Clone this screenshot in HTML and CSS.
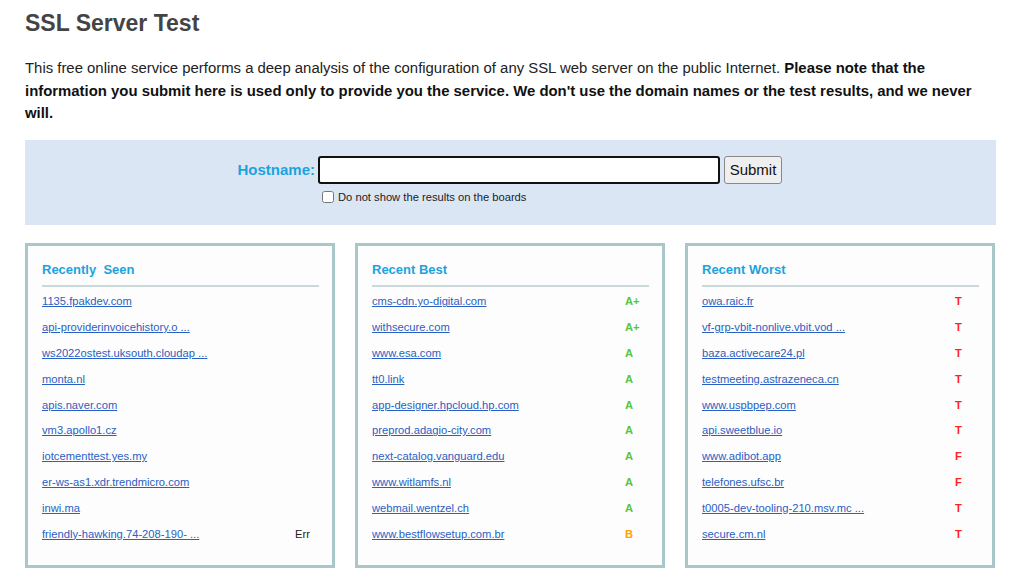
FILE: index.html
```html
<!DOCTYPE html>
<html>
<head>
<meta charset="utf-8">
<title>SSL Server Test</title>
<link rel="stylesheet" href="styles.css">
</head>
<body>
<div class="page">
    <!-- 标题 -->
    <h1 class="title">SSL Server Test</h1>
    <p class="intro">This free online service performs a deep analysis of the configuration of any SSL web server on the public Internet. <b>Please note that the information you submit here is used only to provide you the service. We don't use the domain names or the test results, and we never will.</b></p>

    <!-- 输入框区域 -->
    <div class="submitBox">
        <div class="hostRow">
            <label class="hostLabel" for="host">Hostname:</label>
            <input class="hostInput" id="host" type="text">
            <button class="submitBtn" type="button">Submit</button>
        </div>
        <div class="hideRow">
            <input class="hideCheck" id="hide" type="checkbox">
            <label for="hide">Do not show the results on the boards</label>
        </div>
    </div>

    <!-- 三个列表 -->
    <div class="boards">
        <div class="board">
            <div class="boardTitle">Recently&nbsp; Seen</div>
            <table class="boardList">
                <tr><td><a href="javascript:;">1135.fpakdev.com</a></td><td></td></tr>
                <tr><td><a href="javascript:;">api-providerinvoicehistory.o ...</a></td><td></td></tr>
                <tr><td><a href="javascript:;">ws2022ostest.uksouth.cloudap ...</a></td><td></td></tr>
                <tr><td><a href="javascript:;">monta.nl</a></td><td></td></tr>
                <tr><td><a href="javascript:;">apis.naver.com</a></td><td></td></tr>
                <tr><td><a href="javascript:;">vm3.apollo1.cz</a></td><td></td></tr>
                <tr><td><a href="javascript:;">iotcementtest.yes.my</a></td><td></td></tr>
                <tr><td><a href="javascript:;">er-ws-as1.xdr.trendmicro.com</a></td><td></td></tr>
                <tr><td><a href="javascript:;">inwi.ma</a></td><td></td></tr>
                <tr><td><a href="javascript:;">friendly-hawking.74-208-190- ...</a></td><td class="grade err">Err</td></tr>
            </table>
        </div>
        <div class="board">
            <div class="boardTitle">Recent Best</div>
            <table class="boardList">
                <tr><td><a href="javascript:;">cms-cdn.yo-digital.com</a></td><td class="grade good">A+</td></tr>
                <tr><td><a href="javascript:;">withsecure.com</a></td><td class="grade good">A+</td></tr>
                <tr><td><a href="javascript:;">www.esa.com</a></td><td class="grade good">A</td></tr>
                <tr><td><a href="javascript:;">tt0.link</a></td><td class="grade good">A</td></tr>
                <tr><td><a href="javascript:;">app-designer.hpcloud.hp.com</a></td><td class="grade good">A</td></tr>
                <tr><td><a href="javascript:;">preprod.adagio-city.com</a></td><td class="grade good">A</td></tr>
                <tr><td><a href="javascript:;">next-catalog.vanguard.edu</a></td><td class="grade good">A</td></tr>
                <tr><td><a href="javascript:;">www.witlamfs.nl</a></td><td class="grade good">A</td></tr>
                <tr><td><a href="javascript:;">webmail.wentzel.ch</a></td><td class="grade good">A</td></tr>
                <tr><td><a href="javascript:;">www.bestflowsetup.com.br</a></td><td class="grade warn">B</td></tr>
            </table>
        </div>
        <div class="board">
            <div class="boardTitle">Recent Worst</div>
            <table class="boardList">
                <tr><td><a href="javascript:;">owa.raic.fr</a></td><td class="grade bad">T</td></tr>
                <tr><td><a href="javascript:;">vf-grp-vbit-nonlive.vbit.vod ...</a></td><td class="grade bad">T</td></tr>
                <tr><td><a href="javascript:;">baza.activecare24.pl</a></td><td class="grade bad">T</td></tr>
                <tr><td><a href="javascript:;">testmeeting.astrazeneca.cn</a></td><td class="grade bad">T</td></tr>
                <tr><td><a href="javascript:;">www.uspbpep.com</a></td><td class="grade bad">T</td></tr>
                <tr><td><a href="javascript:;">api.sweetblue.io</a></td><td class="grade bad">T</td></tr>
                <tr><td><a href="javascript:;">www.adibot.app</a></td><td class="grade bad">F</td></tr>
                <tr><td><a href="javascript:;">telefones.ufsc.br</a></td><td class="grade bad">F</td></tr>
                <tr><td><a href="javascript:;">t0005-dev-tooling-210.msv.mc ...</a></td><td class="grade bad">T</td></tr>
                <tr><td><a href="javascript:;">secure.cm.nl</a></td><td class="grade bad">T</td></tr>
            </table>
        </div>
    </div>
</div>
</body>
</html>
```

FILE: styles.css
```css
* {
    margin: 0;
    padding: 0;
    box-sizing: border-box;
}
body {
    font-family: "Liberation Sans", Arial, sans-serif;
    color: #222;
    background-color: #fff;
}
/* 页面容器 */
.page {
    width: 971px;
    margin-left: 25px;
}
.title {
    font-size: 23px;
    font-weight: bold;
    color: #444;
    line-height: 28px;
    padding-top: 9px;
}
.intro {
    font-size: 14.9px;
    line-height: 22.5px;
    margin-top: 20px;
}
.intro b {
    color: #111;
}
/* 输入框区域 */
.submitBox {
    margin-top: 15px;
    height: 85px;
    background-color: #dbe6f5;
    padding-top: 16px;
}
.hostRow {
    display: flex;
    align-items: center;
    padding-left: 209px;
}
.hostLabel {
    font-size: 15px;
    font-weight: bold;
    color: #1ba3e0;
    width: 81px;
    text-align: right;
    margin-right: 3px;
}
.hostInput {
    width: 402px;
    height: 28px;
    border: 2px solid #111;
    border-radius: 3px;
    background: #fff;
    outline: none;
}
.submitBtn {
    margin-left: 4px;
    width: 58px;
    height: 28px;
    font-family: "Liberation Sans", Arial, sans-serif;
    font-size: 15px;
    color: #111;
    background-color: #efefef;
    border: 1px solid #888;
    border-radius: 3px;
}
.hideRow {
    display: flex;
    align-items: center;
    padding-left: 297px;
    margin-top: 7px;
    font-size: 11.2px;
    color: #222;
}
.hideCheck {
    width: 12px;
    height: 12px;
    margin-right: 4px;
}
/* 三个列表 */
.boards {
    display: grid;
    grid-template-columns: 310px 310px 310px;
    column-gap: 20px;
    margin-top: 18px;
}
.board {
    height: 325px;
    border: 3px solid #a9c6c9;
    background-color: #fdfdfd;
    padding: 16px 13px 0 14px;
}
.boardTitle {
    font-size: 13px;
    font-weight: bold;
    color: #1ba3e0;
    padding-bottom: 8px;
    border-bottom: 2px solid #c9d9dc;
}
.boardList {
    width: 100%;
    border-collapse: collapse;
    margin-top: 2px;
}
.boardList td {
    height: 25.8px;
    font-size: 11.2px;
    vertical-align: middle;
}
.boardList a {
    color: #2a5fc4;
}
.grade {
    width: 24px;
    font-weight: bold;
    font-size: 11.5px;
}
.good {
    color: #5ac43c;
}
.warn {
    color: #ffa200;
}
.bad {
    color: #f22;
}
.err {
    font-weight: normal;
    color: #222;
}
```
